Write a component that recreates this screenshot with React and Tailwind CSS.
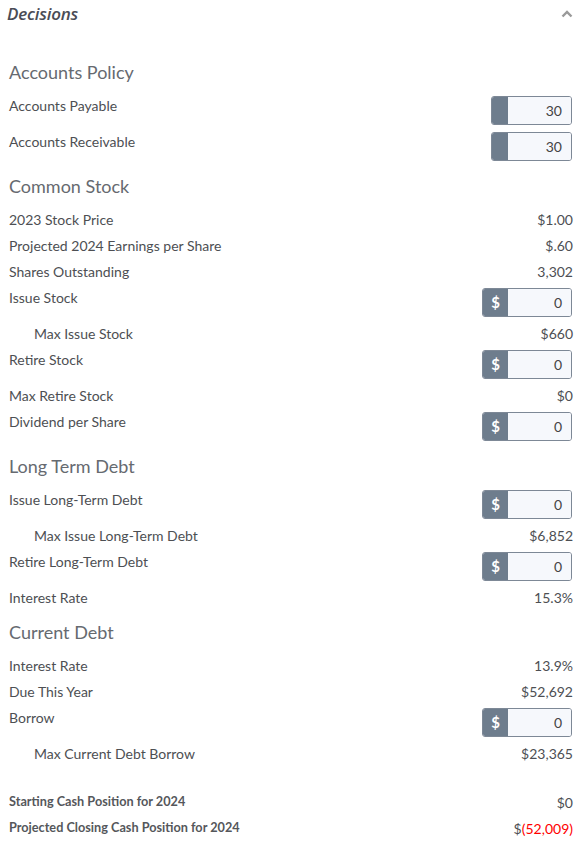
import React from "react";

const font = { fontFamily: "Lato, 'Open Sans', sans-serif" };

function Heading({ children }) {
  return (
    <div className="h-[42px] flex items-center pt-[2px] text-[18px] text-[#666a70]">
      {children}
    </div>
  );
}

function Row({ label, value, indent, bold }) {
  return (
    <div className="h-[26px] flex items-center justify-between text-[14px] text-[#4d4f53]">
      <span className={(indent ? "pl-[25px] " : "") + (bold ? "font-bold text-[12.7px] text-[#55575b]" : "")}>
        {label}
      </span>
      <span>{value}</span>
    </div>
  );
}

function InputRow({ label, value, dollar }) {
  return (
    <div className="h-[36px] flex justify-between text-[14px] text-[#4d4f53]">
      <span className="h-[26px] flex items-center">{label}</span>
      <div className="mt-[4px] h-[29px] flex border border-[#7d8896] rounded-[3px] overflow-hidden mr-[1px]">
        <div
          className={
            "bg-[#6e7d8d] text-white font-bold flex items-center justify-center text-[15px] " +
            (dollar ? "w-[25px]" : "w-[16px]")
          }
        >
          {dollar ? "$" : ""}
        </div>
        <div className="w-[63px] bg-[#f6f8fc] flex items-center justify-end pr-[9px] text-[#444]">
          {value}
        </div>
      </div>
    </div>
  );
}

export default function App() {
  return (
    <div className="w-[584px] h-[849px] bg-white pl-[9px] pr-[11px]" style={font}>
      <div className="h-[50px] flex justify-between">
        <div
          className="-ml-[2px] h-[27px] flex items-center text-[17px] italic font-semibold tracking-[-0.2px] text-[#4a4c55]"
          style={{ fontFamily: "'Open Sans', sans-serif" }}
        >
          Decisions
        </div>
        <div className="h-[27px] flex items-center">
          <svg width="12" height="8" viewBox="0 0 12 8">
            <path d="M1.5 6.5 L6 2 L10.5 6.5" fill="none" stroke="#9a9a9a" strokeWidth="2.4" />
          </svg>
        </div>
      </div>

      <Heading>Accounts Policy</Heading>
      <InputRow label="Accounts Payable" value="30" />
      <InputRow label="Accounts Receivable" value="30" />

      <Heading>Common Stock</Heading>
      <Row label="2023 Stock Price" value="$1.00" />
      <Row label="Projected 2024 Earnings per Share" value="$.60" />
      <Row label="Shares Outstanding" value="3,302" />
      <InputRow label="Issue Stock" value="0" dollar />
      <Row label="Max Issue Stock" value="$660" indent />
      <InputRow label="Retire Stock" value="0" dollar />
      <Row label="Max Retire Stock" value="$0" />
      <InputRow label="Dividend per Share" value="0" dollar />

      <Heading>Long Term Debt</Heading>
      <InputRow label="Issue Long-Term Debt" value="0" dollar />
      <Row label="Max Issue Long-Term Debt" value="$6,852" indent />
      <InputRow label="Retire Long-Term Debt" value="0" dollar />
      <Row label="Interest Rate" value="15.3%" />

      <Heading>Current Debt</Heading>
      <Row label="Interest Rate" value="13.9%" />
      <Row label="Due This Year" value="$52,692" />
      <InputRow label="Borrow" value="0" dollar />
      <Row label="Max Current Debt Borrow" value="$23,365" indent />

      <div className="h-[23px]" />
      <Row label="Starting Cash Position for 2024" value="$0" bold />
      <Row
        label="Projected Closing Cash Position for 2024"
        value={
          <span>
            $<span className="text-[#ff0000]">(52,009)</span>
          </span>
        }
        bold
      />
    </div>
  );
}
